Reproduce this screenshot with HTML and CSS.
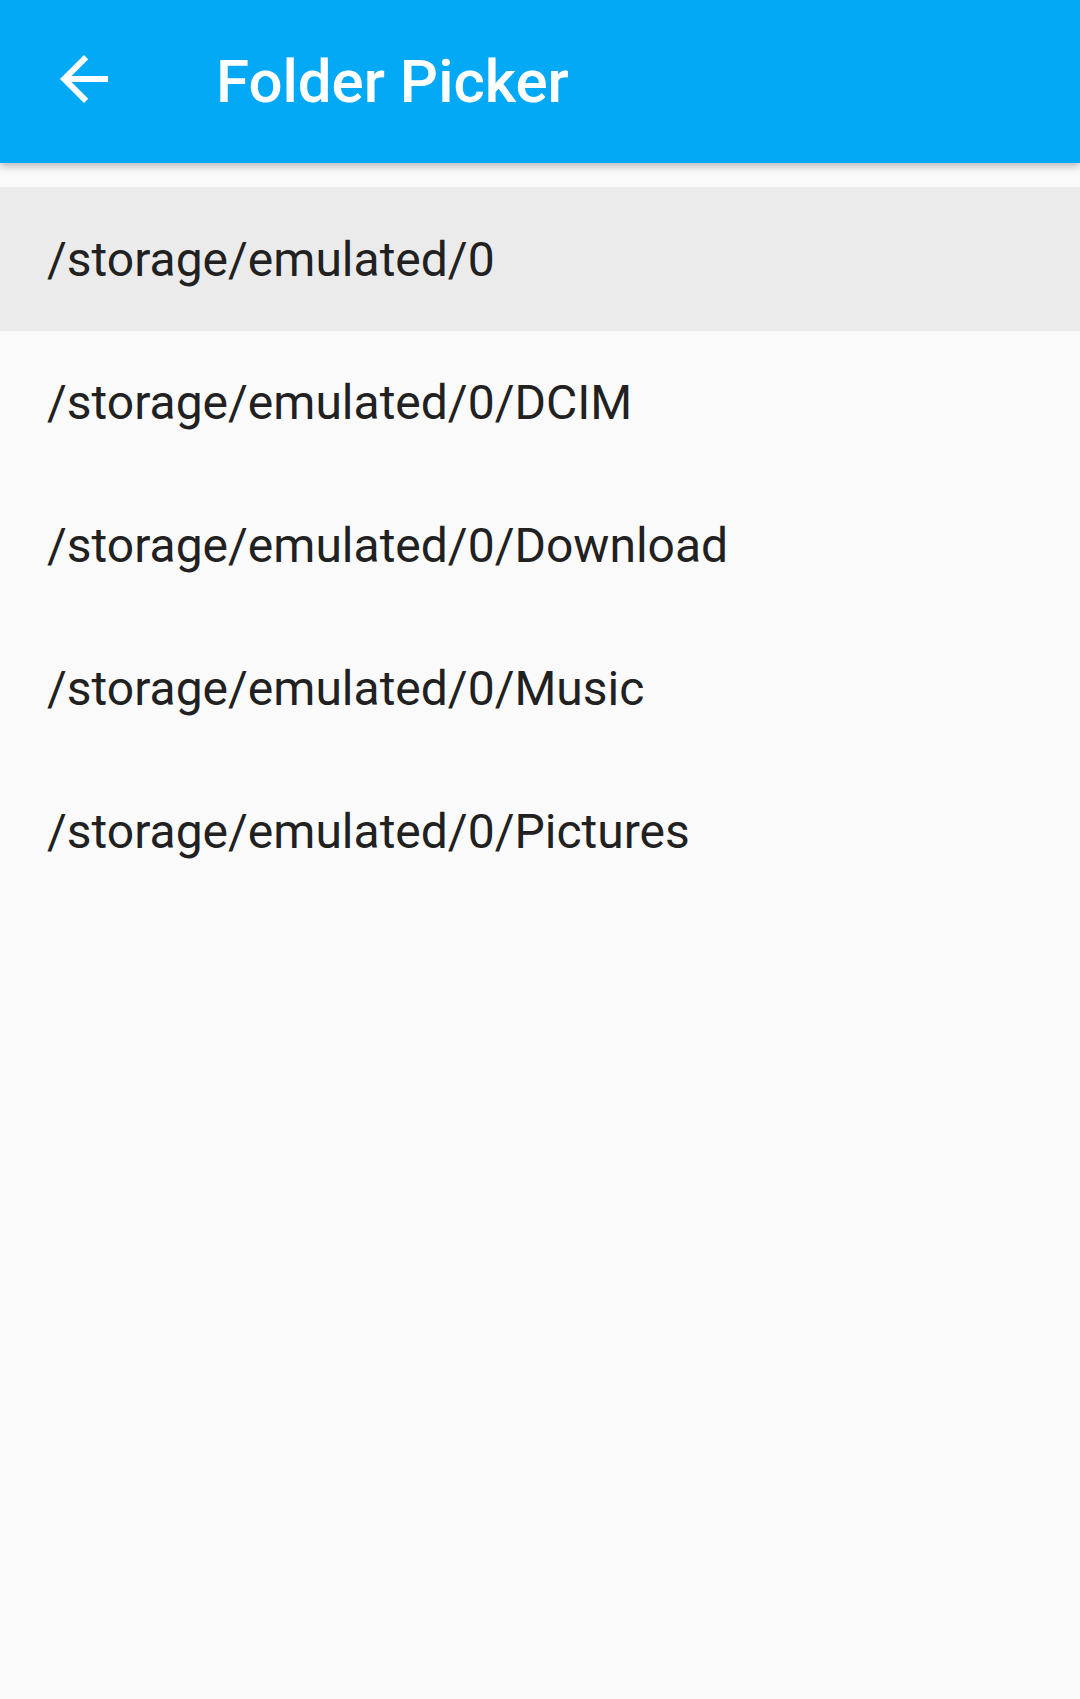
FILE: index.html
```html
<!DOCTYPE html>
<html>
<head>
<meta charset="utf-8">
<link rel="stylesheet" href="styles.css">
</head>
<body>
<header class="toolbar">
  <div class="nav-icon">
    <svg viewBox="0 0 24 24" width="72" height="72"><path fill="#fff" d="M20 11H7.83l5.59-5.59L12 4l-8 8 8 8 1.41-1.41L7.83 13H20v-2z"/></svg>
  </div>
  <h1 class="title">Folder Picker</h1>
</header>
<main class="list">
  <div class="row selected">/storage/emulated/0</div>
  <div class="row">/storage/emulated/0/DCIM</div>
  <div class="row">/storage/emulated/0/Download</div>
  <div class="row">/storage/emulated/0/Music</div>
  <div class="row">/storage/emulated/0/Pictures</div>
</main>
</body>
</html>
```
FILE: styles.css
```css
html, body {
  margin: 0;
  padding: 0;
  background: #fafafa;
  height: 100%;
}
body {
  font-family: Roboto, "Noto Sans", sans-serif;
  overflow: hidden;
}
.toolbar {
  height: 163px;
  background: #03a9f4;
  display: flex;
  align-items: center;
  box-shadow: 0 3px 8px rgba(0,0,0,0.28);
  position: relative;
  z-index: 1;
}
.nav-icon {
  width: 72px;
  height: 72px;
  margin-left: 48px;
  margin-top: -5px;
  display: flex;
}
.title {
  margin: 0 0 0 96px;
  color: #fff;
  font-size: 60px;
  font-weight: 500;
  line-height: 1;
}
.list {
  padding-top: 24px;
}
.row {
  height: 143px;
  display: flex;
  align-items: center;
  padding-left: 47px;
  font-size: 48px;
  color: #212121;
}
.row.selected {
  height: 144px;
  background: #ebebeb;
}
```
